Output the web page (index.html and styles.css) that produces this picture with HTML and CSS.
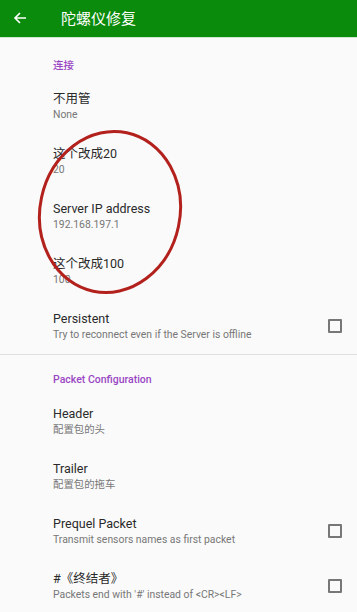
FILE: index.html
```html
<!DOCTYPE html>
<html lang="zh">
<head>
<meta charset="utf-8">
<title>陀螺仪修复</title>
<link rel="stylesheet" href="styles.css">
</head>
<body>
<div class="app">
  <header class="toolbar">
    <svg class="back" width="14" height="14" viewBox="0 0 14 14"><path d="M13 7H2M7 2L2 7l5 5" fill="none" stroke="#fff" stroke-width="1.6"/></svg>
    <span class="title">陀螺仪修复</span>
  </header>
  <main class="list">
    <div class="cat cat-first">连接</div>
    <div class="item"><div class="text"><div class="t">不用管</div><div class="s">None</div></div></div>
    <div class="item"><div class="text"><div class="t">这个改成20</div><div class="s">20</div></div></div>
    <div class="item"><div class="text"><div class="t">Server IP address</div><div class="s">192.168.197.1</div></div></div>
    <div class="item"><div class="text"><div class="t">这个改成100</div><div class="s">100</div></div></div>
    <div class="item"><div class="text"><div class="t">Persistent</div><div class="s">Try to reconnect even if the Server is offline</div></div><span class="cb"></span></div>
    <div class="divider"></div>
    <div class="cat cat-second">Packet Configuration</div>
    <div class="item"><div class="text"><div class="t">Header</div><div class="s">配置包的头</div></div></div>
    <div class="item"><div class="text"><div class="t">Trailer</div><div class="s">配置包的拖车</div></div></div>
    <div class="item"><div class="text"><div class="t">Prequel Packet</div><div class="s">Transmit sensors names as first packet</div></div><span class="cb"></span></div>
    <div class="item"><div class="text"><div class="t">#《终结者》</div><div class="s">Packets end with '#' instead of &lt;CR&gt;&lt;LF&gt;</div></div><span class="cb"></span></div>
  </main>
  <svg class="mark" width="357" height="612" viewBox="0 0 357 612"><ellipse cx="110" cy="212" rx="70" ry="81" transform="rotate(12 110 212)" fill="none" stroke="#b3211d" stroke-width="3"/></svg>
</div>
</body>
</html>
```

FILE: styles.css
```css
html, body { margin: 0; padding: 0; }
body { background: #fafafa; font-family: Roboto, "Noto Sans CJK SC", sans-serif; }
.app { position: relative; width: 357px; height: 612px; overflow: hidden; background: #fafafa; }
.toolbar { height: 38px; background: #0b8b0b; display: flex; align-items: center; border-bottom: 1px solid #cfe8cf; box-sizing: border-box; }
.back { margin-left: 13px; margin-top: -2px; }
.title { margin-left: 34px; color: #fff; font-size: 15px; font-family: "Noto Sans CJK SC", sans-serif; margin-top: -3px; }
.list { display: flex; flex-direction: column; }
.cat { padding-left: 53px; color: #9a47c4; font-size: 10.5px; font-weight: 500; line-height: 14px; }
.cat-first { padding-top: 21px; padding-bottom: 5.5px; }
.cat-second { padding-top: 18px; padding-bottom: 6.5px; }
.item { height: 55px; display: flex; align-items: center; padding-left: 53px; padding-right: 15px; }
.text { flex: 1; }
.t { font-size: 12.5px; line-height: 17px; color: #2a2a2a; }
.s { font-size: 10.4px; line-height: 15px; color: #777; }
.cb { width: 10px; height: 10px; border: 2px solid #777; border-radius: 1px; flex: none; }
.divider { height: 1px; background: #e0e0e0; }
.mark { position: absolute; left: 0; top: 0; pointer-events: none; }
```
